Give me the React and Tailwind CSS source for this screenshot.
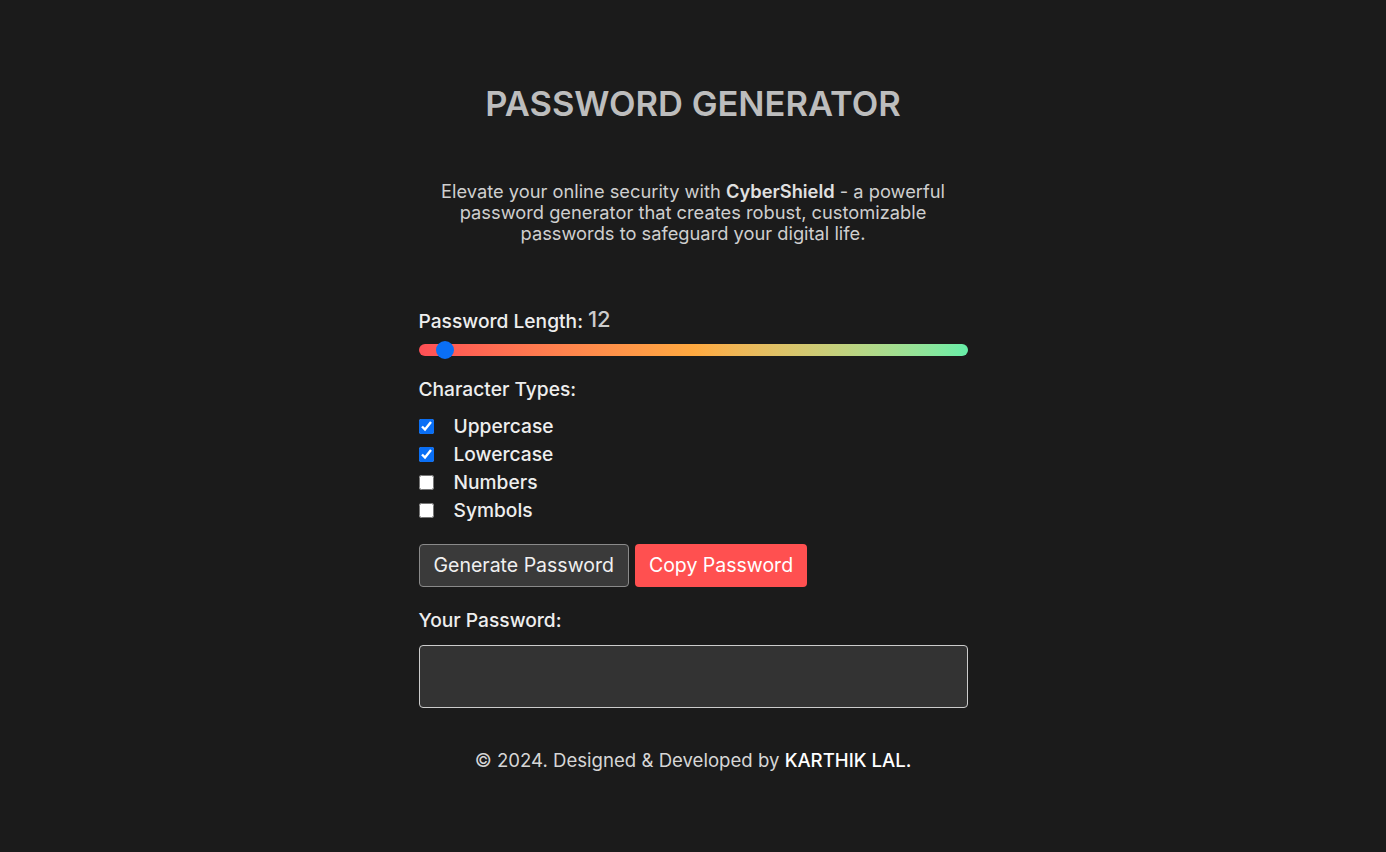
import { useState } from 'react'

const OPTIONS = [
  { id: 'upper', label: 'Uppercase', checked: true },
  { id: 'lower', label: 'Lowercase', checked: true },
  { id: 'numbers', label: 'Numbers', checked: false },
  { id: 'symbols', label: 'Symbols', checked: false },
]

const MIN = 8
const MAX = 128

export default function App() {
  const [length] = useState(12)
  const [opts, setOpts] = useState(OPTIONS)
  const ratio = (length - MIN) / (MAX - MIN)

  const toggle = (id) =>
    setOpts((prev) => prev.map((o) => (o.id === id ? { ...o, checked: !o.checked } : o)))

  return (
    <div
      className="min-h-screen bg-[#1b1b1b] text-[#eeeeee] flex flex-col items-center"
      style={{ fontFamily: 'Inter, "DejaVu Sans", sans-serif' }}
    >
      <h1 className="mt-[84px] h-[40px] leading-[40px] text-[34.5px] font-semibold text-[#bdbdbd]">
        PASSWORD GENERATOR
      </h1>

      <p className="mt-[57px] w-[560px] text-center text-[18.3px] leading-[21px] text-[#cfcfcf]">
        Elevate your online security with <strong className="font-semibold text-[#e0e0e0]">CyberShield</strong> - a
        powerful password generator that creates robust, customizable passwords to safeguard your digital life.
      </p>

      {/* main card */}
      <div className="mt-[62px] w-[549px] flex flex-col">
        <div className="h-[28px] flex items-end gap-[5px] text-[19.2px] font-medium">
          <span className="leading-[26px]">Password Length:</span>
          <span className="text-[22px] leading-[30px] text-[#cccccc]">{length}</span>
        </div>

        <div className="relative mt-[10px] h-[12px] rounded-full bg-gradient-to-r from-[#ff4f55] via-[#ffa940] to-[#66eea8]">
          <div
            className="absolute top-1/2 -translate-y-1/2 -translate-x-1/2 w-[18px] h-[18px] rounded-full bg-[#0a6ff5]"
            style={{ left: `calc(9px + ${ratio} * (100% - 18px))` }}
          />
        </div>

        <div className="mt-[21px] h-[24px] leading-[24px] text-[19.2px] font-medium">Character Types:</div>

        <div className="mt-[11px] flex flex-col">
          {opts.map((o) => (
            <label key={o.id} className="h-[28px] flex items-center gap-[20px] text-[19.2px] font-medium cursor-pointer">
              <input
                type="checkbox"
                checked={o.checked}
                onChange={() => toggle(o.id)}
                className="w-[15px] h-[15px] m-0 accent-[#0a6ff5]"
              />
              <span>{o.label}</span>
            </label>
          ))}
        </div>

        <div className="mt-[20px] flex gap-[6px]">
          <button className="h-[43px] px-[14px] rounded-[4px] border border-[#8a8a8a] bg-[#3a3a3a] text-[19.5px] text-[#f0f0f0]">
            Generate Password
          </button>
          <button className="h-[43px] px-[14px] rounded-[4px] bg-[#ff5050] text-[19.5px] text-white">
            Copy Password
          </button>
        </div>

        <div className="mt-[21px] h-[24px] leading-[24px] text-[19.2px] font-medium">Your Password:</div>

        <div className="mt-[13px] h-[63px] rounded-[4px] border border-[#cccccc] bg-[#333333]" />
      </div>

      <footer className="mt-[40px] h-[24px] leading-[24px] text-[18.6px] text-[#d6d6d6]">
        © 2024. Designed &amp; Developed by <span className="font-medium text-white">KARTHIK LAL.</span>
      </footer>
    </div>
  )
}
